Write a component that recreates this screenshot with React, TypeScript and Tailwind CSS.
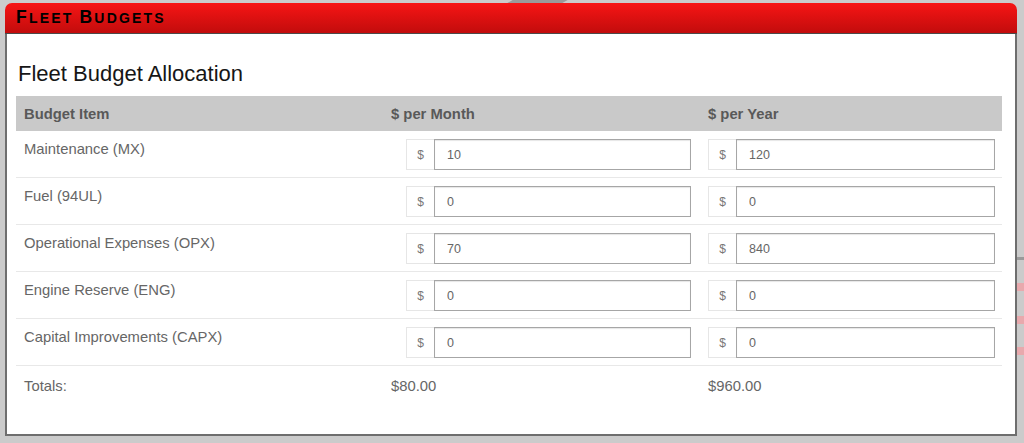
import React, { useState } from 'react';

type BudgetRow = {
  id: string;
  label: string;
  monthly: number;
};

const INITIAL_ROWS: BudgetRow[] = [
  { id: 'mx', label: 'Maintenance (MX)', monthly: 10 },
  { id: 'fuel', label: 'Fuel (94UL)', monthly: 0 },
  { id: 'opx', label: 'Operational Expenses (OPX)', monthly: 70 },
  { id: 'eng', label: 'Engine Reserve (ENG)', monthly: 0 },
  { id: 'capx', label: 'Capital Improvements (CAPX)', monthly: 0 },
];

const GRID = 'grid grid-cols-[367px_317px_302px]';

const MoneyInput: React.FC<{ value: number; onChange: (v: number) => void }> = ({ value, onChange }) => (
  <div className="flex h-[31px] w-full">
    <span className="flex w-[28px] shrink-0 items-center justify-center border border-r-0 border-[#e6e6e6] bg-white text-[12px] text-[#777]">
      $
    </span>
    <input
      type="text"
      value={String(value)}
      onChange={(e) => onChange(Number(e.target.value.replace(/[^0-9.]/g, '')) || 0)}
      className="h-full w-full min-w-0 border border-[#a6a6a6] bg-white px-3 text-[12.5px] text-[#666] shadow-[inset_0_1px_1px_rgba(0,0,0,0.1)] outline-none"
    />
  </div>
);

// small-caps look: first letter full size, the rest uppercase and smaller
const SmallCaps: React.FC<{ text: string }> = ({ text }) => (
  <>
    {text.split(' ').map((word, i) => (
      <span key={i} className={i > 0 ? 'ml-[6px]' : ''}>
        <span className="text-[17.5px]">{word[0]}</span>
        <span className="text-[14px] uppercase">{word.slice(1)}</span>
      </span>
    ))}
  </>
);

const App: React.FC = () => {
  const [rows, setRows] = useState<BudgetRow[]>(INITIAL_ROWS);

  const setMonthly = (id: string, v: number) =>
    setRows((prev) => prev.map((r) => (r.id === id ? { ...r, monthly: v } : r)));

  const totalMonth = rows.reduce((sum, r) => sum + r.monthly, 0);

  return (
    <div className="relative h-[443px] w-[1024px] overflow-hidden bg-[#cbcbcb] px-[5px] pt-[3px] font-['Liberation_Sans',Arial,sans-serif]">
      {/* background bits peeking out behind the panel */}
      <div className="absolute left-[510px] top-0 h-[3px] w-[55px] -skew-x-[60deg] bg-[#9a9a9a]" />
      <div className="absolute right-0 top-[257px] h-[3px] w-[7px] bg-[#9a9a9a]" />
      <div className="absolute right-0 top-[283px] h-[8px] w-[7px] bg-[#e8a9ad]" />
      <div className="absolute right-0 top-[316px] h-[8px] w-[7px] bg-[#e8a9ad]" />
      <div className="absolute right-0 top-[347px] h-[8px] w-[7px] bg-[#e8a9ad]" />

      <div className="relative flex h-[433px] w-[1012px] flex-col">
        <div className="flex h-[31px] shrink-0 items-center rounded-t-[7px] border-b border-[#4a4a4a] bg-gradient-to-b from-[#f71515] to-[#c20c0c] pl-[11px]">
          <h1 className="font-bold leading-none tracking-[2.2px] text-black">
            <SmallCaps text="Fleet Budgets" />
          </h1>
        </div>

        <div className="flex-1 border-x-2 border-b-2 border-[#6e6e6e] bg-white px-[9px]">
          <h2 className="mb-[9px] mt-[27px] pl-[2px] text-[22px] leading-[26px] text-[#161616]">
            Fleet Budget Allocation
          </h2>

          <div className="w-[986px] text-[14.8px] text-[#666]">
            <div className={`${GRID} h-[35px] items-center bg-[#c9c9c9] font-bold leading-[20px] text-[#595959]`}>
              <div className="pl-2">Budget Item</div>
              <div className="pl-2">$ per Month</div>
              <div className="pl-2">$ per Year</div>
            </div>

            {rows.map((row) => (
              <div key={row.id} className={`${GRID} h-[47px] border-b border-[#e8e8e8] pt-[8px] leading-[20px]`}>
                <div className="pl-2">{row.label}</div>
                <div className="pl-[23px] pr-[9px]">
                  <MoneyInput value={row.monthly} onChange={(v) => setMonthly(row.id, v)} />
                </div>
                <div className="pl-2 pr-[7px]">
                  <MoneyInput value={row.monthly * 12} onChange={(v) => setMonthly(row.id, v / 12)} />
                </div>
              </div>
            ))}

            <div className={`${GRID} pt-[10px] leading-[20px]`}>
              <div className="pl-2">Totals:</div>
              <div className="pl-2">${totalMonth.toFixed(2)}</div>
              <div className="pl-2">${(totalMonth * 12).toFixed(2)}</div>
            </div>
          </div>
        </div>
      </div>
    </div>
  );
};

export default App;
